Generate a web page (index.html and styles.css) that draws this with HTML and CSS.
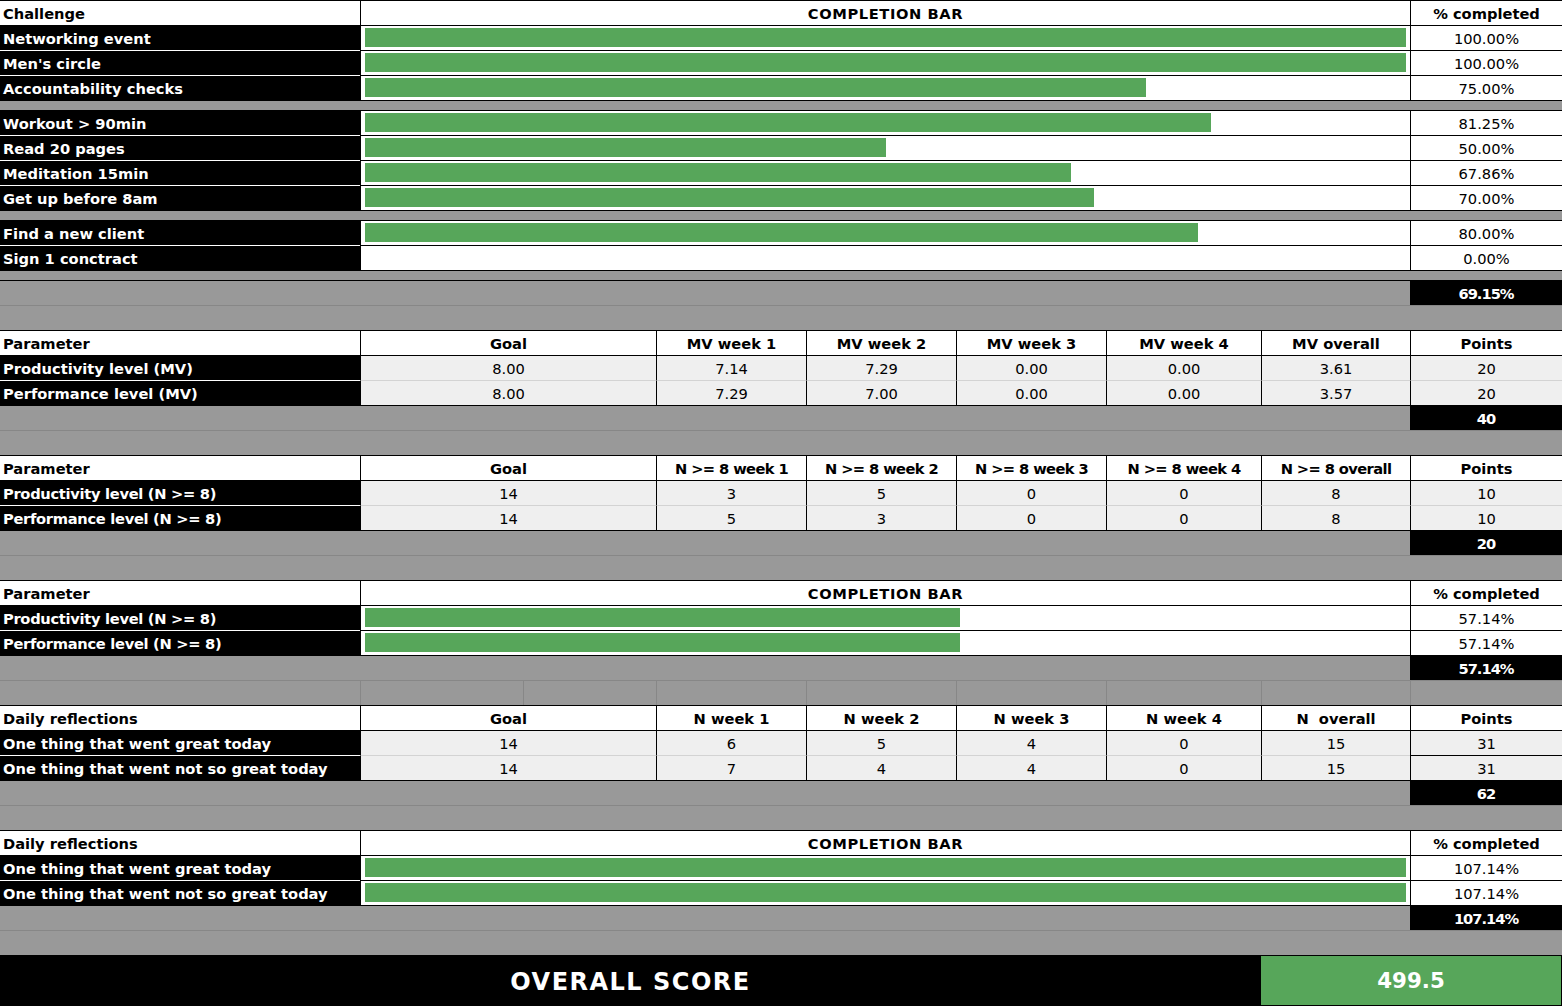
FILE: index.html
```html
<!DOCTYPE html>
<html lang="en">
<head>
<meta charset="utf-8">
<title>Challenge tracker</title>
<link rel="stylesheet" href="styles.css">
</head>
<body>
<div class="sheet">

  <!-- Section 1: Challenges -->
  <div class="row">
    <div class="c hd first">Challenge</div>
    <div class="c hd vl caps span-bar">COMPLETION BAR</div>
    <div class="c hd vl">% completed</div>
  </div>
  <div class="row">
    <div class="c lbl">Networking event</div>
    <div class="c vl barcell span-bar"><div class="bar" style="width:100%"></div></div>
    <div class="c vl val">100.00%</div>
  </div>
  <div class="row">
    <div class="c lbl nx">Men's circle</div>
    <div class="c vl barcell span-bar"><div class="bar" style="width:100%"></div></div>
    <div class="c vl val">100.00%</div>
  </div>
  <div class="row">
    <div class="c lbl nx">Accountability checks</div>
    <div class="c vl barcell span-bar"><div class="bar" style="width:75%"></div></div>
    <div class="c vl val">75.00%</div>
  </div>
  <div class="row thin"><div class="c gray span-all"></div></div>
  <div class="row">
    <div class="c lbl">Workout &gt; 90min</div>
    <div class="c vl barcell span-bar"><div class="bar" style="width:81.25%"></div></div>
    <div class="c vl val">81.25%</div>
  </div>
  <div class="row">
    <div class="c lbl nx">Read 20 pages</div>
    <div class="c vl barcell span-bar"><div class="bar" style="width:50%"></div></div>
    <div class="c vl val">50.00%</div>
  </div>
  <div class="row">
    <div class="c lbl nx">Meditation 15min</div>
    <div class="c vl barcell span-bar"><div class="bar" style="width:67.86%"></div></div>
    <div class="c vl val">67.86%</div>
  </div>
  <div class="row">
    <div class="c lbl nx">Get up before 8am</div>
    <div class="c vl barcell span-bar"><div class="bar" style="width:70%"></div></div>
    <div class="c vl val">70.00%</div>
  </div>
  <div class="row thin"><div class="c gray span-all"></div></div>
  <div class="row">
    <div class="c lbl">Find a new client</div>
    <div class="c vl barcell span-bar"><div class="bar" style="width:80%"></div></div>
    <div class="c vl val">80.00%</div>
  </div>
  <div class="row">
    <div class="c lbl nx">Sign 1 conctract</div>
    <div class="c vl barcell span-bar"><div class="bar" style="width:0%"></div></div>
    <div class="c vl val">0.00%</div>
  </div>
  <div class="row thin"><div class="c gray span-all"></div></div>
  <div class="row">
    <div class="c gray span-ah"></div>
    <div class="c tot">69.15%</div>
  </div>
  <div class="row"><div class="c gray after span-all"></div></div>

  <!-- Section 2: MV -->
  <div class="row">
    <div class="c hd first">Parameter</div>
    <div class="c hd vl span-goal">Goal</div>
    <div class="c hd vl">MV week 1</div>
    <div class="c hd vl">MV week 2</div>
    <div class="c hd vl">MV week 3</div>
    <div class="c hd vl">MV week 4</div>
    <div class="c hd vl">MV overall</div>
    <div class="c hd vl">Points</div>
  </div>
  <div class="row">
    <div class="c lbl">Productivity level (MV)</div>
    <div class="c vl val lg span-goal">8.00</div>
    <div class="c vl val lg">7.14</div>
    <div class="c vl val lg">7.29</div>
    <div class="c vl val lg">0.00</div>
    <div class="c vl val lg">0.00</div>
    <div class="c vl val lg">3.61</div>
    <div class="c vl val lg">20</div>
  </div>
  <div class="row">
    <div class="c lbl nx">Performance level (MV)</div>
    <div class="c vl val lg soft span-goal">8.00</div>
    <div class="c vl val lg soft">7.29</div>
    <div class="c vl val lg soft">7.00</div>
    <div class="c vl val lg soft">0.00</div>
    <div class="c vl val lg soft">0.00</div>
    <div class="c vl val lg soft">3.57</div>
    <div class="c vl val lg soft">20</div>
  </div>
  <div class="row">
    <div class="c gray span-ah"></div>
    <div class="c tot">40</div>
  </div>
  <div class="row"><div class="c gray after span-all"></div></div>

  <!-- Section 3: N >= 8 -->
  <div class="row">
    <div class="c hd first">Parameter</div>
    <div class="c hd vl span-goal">Goal</div>
    <div class="c hd vl tight">N &gt;= 8 week 1</div>
    <div class="c hd vl tight">N &gt;= 8 week 2</div>
    <div class="c hd vl tight">N &gt;= 8 week 3</div>
    <div class="c hd vl tight">N &gt;= 8 week 4</div>
    <div class="c hd vl tight">N &gt;= 8 overall</div>
    <div class="c hd vl">Points</div>
  </div>
  <div class="row">
    <div class="c lbl tight-lbl">Productivity level (N &gt;= 8)</div>
    <div class="c vl val lg span-goal">14</div>
    <div class="c vl val lg">3</div>
    <div class="c vl val lg">5</div>
    <div class="c vl val lg">0</div>
    <div class="c vl val lg">0</div>
    <div class="c vl val lg">8</div>
    <div class="c vl val lg">10</div>
  </div>
  <div class="row">
    <div class="c lbl nx tight-lbl">Performance level (N &gt;= 8)</div>
    <div class="c vl val lg soft span-goal">14</div>
    <div class="c vl val lg soft">5</div>
    <div class="c vl val lg soft">3</div>
    <div class="c vl val lg soft">0</div>
    <div class="c vl val lg soft">0</div>
    <div class="c vl val lg soft">8</div>
    <div class="c vl val lg soft">10</div>
  </div>
  <div class="row">
    <div class="c gray span-ah"></div>
    <div class="c tot">20</div>
  </div>
  <div class="row"><div class="c gray after span-all"></div></div>

  <!-- Section 4: completion N >= 8 -->
  <div class="row">
    <div class="c hd first">Parameter</div>
    <div class="c hd vl caps span-bar">COMPLETION BAR</div>
    <div class="c hd vl">% completed</div>
  </div>
  <div class="row">
    <div class="c lbl tight-lbl">Productivity level (N &gt;= 8)</div>
    <div class="c vl barcell span-bar"><div class="bar" style="width:57.14%"></div></div>
    <div class="c vl val">57.14%</div>
  </div>
  <div class="row">
    <div class="c lbl nx tight-lbl">Performance level (N &gt;= 8)</div>
    <div class="c vl barcell span-bar"><div class="bar" style="width:57.14%"></div></div>
    <div class="c vl val">57.14%</div>
  </div>
  <div class="row">
    <div class="c gray span-ah"></div>
    <div class="c tot">57.14%</div>
  </div>
  <div class="row">
    <div class="c gray after"></div>
    <div class="c gray after gl"></div>
    <div class="c gray after gl"></div>
    <div class="c gray after gl"></div>
    <div class="c gray after gl"></div>
    <div class="c gray after gl"></div>
    <div class="c gray after gl"></div>
    <div class="c gray after gl"></div>
    <div class="c gray after gl"></div>
  </div>

  <!-- Section 5: Daily reflections -->
  <div class="row">
    <div class="c hd first">Daily reflections</div>
    <div class="c hd vl span-goal">Goal</div>
    <div class="c hd vl">N week 1</div>
    <div class="c hd vl">N week 2</div>
    <div class="c hd vl">N week 3</div>
    <div class="c hd vl">N week 4</div>
    <div class="c hd vl pre">N  overall</div>
    <div class="c hd vl">Points</div>
  </div>
  <div class="row">
    <div class="c lbl">One thing that went great today</div>
    <div class="c vl val lg span-goal">14</div>
    <div class="c vl val lg">6</div>
    <div class="c vl val lg">5</div>
    <div class="c vl val lg">4</div>
    <div class="c vl val lg">0</div>
    <div class="c vl val lg">15</div>
    <div class="c vl val lg">31</div>
  </div>
  <div class="row">
    <div class="c lbl nx">One thing that went not so great today</div>
    <div class="c vl val lg soft span-goal">14</div>
    <div class="c vl val lg soft">7</div>
    <div class="c vl val lg soft">4</div>
    <div class="c vl val lg soft">4</div>
    <div class="c vl val lg soft">0</div>
    <div class="c vl val lg soft">15</div>
    <div class="c vl val lg">31</div>
  </div>
  <div class="row">
    <div class="c gray span-ah"></div>
    <div class="c tot">62</div>
  </div>
  <div class="row"><div class="c gray after span-all"></div></div>

  <!-- Section 6: completion daily reflections -->
  <div class="row">
    <div class="c hd first">Daily reflections</div>
    <div class="c hd vl caps span-bar">COMPLETION BAR</div>
    <div class="c hd vl">% completed</div>
  </div>
  <div class="row">
    <div class="c lbl">One thing that went great today</div>
    <div class="c vl barcell span-bar"><div class="bar" style="width:100%"></div></div>
    <div class="c vl val">107.14%</div>
  </div>
  <div class="row">
    <div class="c lbl nx">One thing that went not so great today</div>
    <div class="c vl barcell span-bar"><div class="bar" style="width:100%"></div></div>
    <div class="c vl val">107.14%</div>
  </div>
  <div class="row">
    <div class="c gray span-ah"></div>
    <div class="c tot">107.14%</div>
  </div>
  <div class="row"><div class="c gray after span-all"></div></div>

  <!-- Overall -->
  <div class="row overall">
    <div class="ov-label">OVERALL SCORE</div>
    <div class="ov-score">499.5</div>
  </div>

</div>
</body>
</html>
```

FILE: styles.css
```css
body {
  margin: 0;
  background: #ffffff;
  font-family: "DejaVu Sans", "Liberation Sans", sans-serif;
  color: #000000;
}

.sheet {
  width: 1562px;
}

.row {
  display: grid;
  grid-template-columns: 360px 163px 133px 150px 150px 150px 155px 149px 152px;
  height: 25px;
}

.row.thin {
  height: 10px;
}

.c {
  box-sizing: border-box;
  height: 100%;
  border-top: 1px solid #000000;
  overflow: hidden;
  white-space: nowrap;
  font-size: 14.67px;
  line-height: 22px;
  padding-top: 2px;
}

.span-bar { grid-column: 2 / 9; }
.span-goal { grid-column: 2 / 4; }
.span-ah { grid-column: 1 / 9; }
.span-all { grid-column: 1 / 10; }

.vl {
  border-left: 1px solid #000000;
}

.lbl {
  background: #000000;
  color: #ffffff;
  font-weight: 700;
  padding-left: 3px;
}

.lbl.nx {
  border-top-color: #ffffff;
}

.tight-lbl {
  letter-spacing: -0.3px;
}

.hd {
  background: #ffffff;
  font-weight: 700;
  text-align: center;
}

.hd.first {
  text-align: left;
  padding-left: 3px;
}

.caps {
  letter-spacing: 0.6px;
}

.tight {
  letter-spacing: -0.6px;
}

.pre {
  white-space: pre;
}

.val {
  background: #ffffff;
  text-align: center;
  font-weight: 400;
}

.val.lg {
  background: #efefef;
}

.val.soft {
  border-top-color: #d3d3d3;
}

.tot {
  background: #000000;
  color: #ffffff;
  font-weight: 700;
  text-align: center;
  letter-spacing: -1px;
}

.gray {
  background: #999999;
}

.gray.after {
  border-top-color: #878787;
}

.gray.gl {
  border-left: 1px solid #878787;
}

.barcell {
  background: #ffffff;
  padding: 2px 4px 0 4px;
}

.bar {
  height: 19px;
  background: #57a65a;
}

.row.overall {
  height: 51px;
}

.ov-label {
  grid-column: 1 / 8;
  box-sizing: border-box;
  background: #000000;
  color: #ffffff;
  font-weight: 700;
  font-size: 24px;
  letter-spacing: 1.5px;
  display: flex;
  align-items: center;
  justify-content: center;
  padding-top: 2px;
}

.ov-score {
  grid-column: 8 / 10;
  box-sizing: border-box;
  background: #57a65a;
  color: #ffffff;
  font-weight: 700;
  font-size: 21.33px;
  border-top: 1px solid #000000;
  border-right: 1px solid #000000;
  border-bottom: 1px solid #000000;
  display: flex;
  align-items: center;
  justify-content: center;
}
```
